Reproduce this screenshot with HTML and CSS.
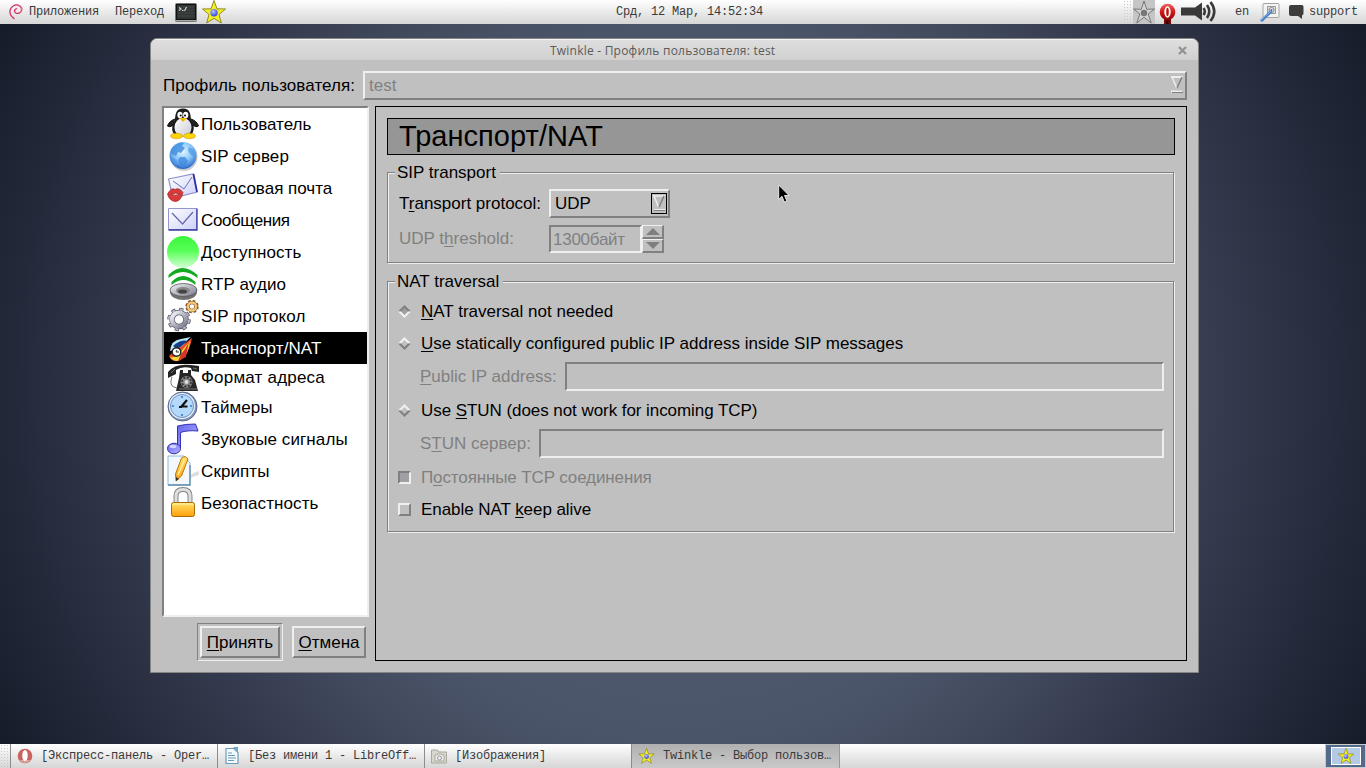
FILE: index.html
```html
<!DOCTYPE html>
<html lang="ru">
<head>
<meta charset="utf-8">
<title>Twinkle</title>
<link rel="stylesheet" href="styles.css">
</head>
<body>
<svg class="defs" width="0" height="0">
  <defs>
    <linearGradient id="belly" x1="0" y1="0" x2="1" y2="1"><stop offset="0" stop-color="#fff"/><stop offset="1" stop-color="#c9c9d4"/></linearGradient>
    <radialGradient id="globe" cx=".5" cy=".35" r=".65"><stop offset="0" stop-color="#e4f5ff"/><stop offset=".5" stop-color="#8fcbfa"/><stop offset="1" stop-color="#2765c8"/></radialGradient>
    <linearGradient id="paper" x1="0" y1="0" x2="1" y2="1"><stop offset="0" stop-color="#fff"/><stop offset="1" stop-color="#ccd0f8"/></linearGradient>
    <linearGradient id="green" x1="0" y1="0" x2="0" y2="1"><stop offset="0" stop-color="#3cf53c"/><stop offset=".45" stop-color="#55ff55"/><stop offset="1" stop-color="#d4ffd4"/></linearGradient>
    <linearGradient id="metal" x1="0" y1="0" x2="1" y2="1"><stop offset="0" stop-color="#f6f6fa"/><stop offset="1" stop-color="#77778a"/></linearGradient>
    <linearGradient id="gold" x1="0" y1="0" x2="0" y2="1"><stop offset="0" stop-color="#ffe56a"/><stop offset="1" stop-color="#ff9d0a"/></linearGradient>
    <linearGradient id="note" x1="0" y1="0" x2="1" y2="1"><stop offset="0" stop-color="#6464f0"/><stop offset="1" stop-color="#b4b4ff"/></linearGradient>
    <linearGradient id="red" x1="0" y1="0" x2="0" y2="1"><stop offset="0" stop-color="#f2655c"/><stop offset=".5" stop-color="#cf1916"/><stop offset="1" stop-color="#8d0606"/></linearGradient>
    <radialGradient id="ball" cx=".4" cy=".35" r=".7"><stop offset="0" stop-color="#b8c8ff"/><stop offset="1" stop-color="#2a3ae0"/></radialGradient>
    <symbol id="star" viewBox="0 0 24 24">
      <path d="M12 .5 15 8.800 23.500 9 17 14.500 19.300 23 12 18.300 4.700 23 7 14.500.5 9 9 8.800Z" fill="#f5ee20" stroke="#77720c" stroke-width=".8"/>
      <circle cx="12" cy="12.700" r="3.700" fill="url(#ball)"/>
    </symbol>
  </defs>
</svg>

<div class="screen">
  <header class="panel panel-top">
    <nav class="panel-menu">
      <svg class="debian" width="14" height="16" viewBox="0 0 14 16"><path d="M5.500 15C1.500 12 .2 8.500 1.300 5.500 2.500 2 6 .3 9.400 1.200 12.500 2.200 13.500 5 12 7.500 10.500 9.700 7.500 10 6 8.300 5 6.800 6 4.500 8.200 4.800" fill="none" stroke="#d6245c" stroke-width="1.200"/><path d="M9 1.500c2.800.5 4.200 2.500 3.300 5" fill="none" stroke="#e0608a" stroke-width="1.500"/></svg>
      <span class="menu-apps">Приложения</span>
      <span class="menu-go">Переход</span>
      <svg class="term" width="22" height="19" viewBox="0 0 22 19"><rect x=".5" y=".5" width="21" height="18" rx="1" fill="#a9aca9" stroke="#777"/><rect x="1.500" y="1.500" width="19" height="15" fill="#303432" stroke="#111"/><path d="M3 4h16M3 7h16M3 10h16M3 13h16" stroke="#434a48"/><path d="m4 4.500 2 1.500-2 1.500M7 7.500h1.500M9.500 8l2-4" stroke="#ddd" stroke-width="1.100" fill="none"/></svg>
      <svg width="26" height="24" class="launcher"><use href="#star"/></svg>
    </nav>
    <div class="clock">Срд, 12 Мар, 14:52:34</div>
    <div class="tray">
      <span class="grip"></span>
      <span class="tray-star"><svg width="22" height="24" viewBox="0 0 22 24"><path d="m11 1 2.700 8.300 7.800-.3-6.300 5 3 9-7.200-5.700L3.800 23l3-9L.5 9l7.800.3Z" fill="#d2d2d2" stroke="#777" stroke-width="1"/><circle cx="11" cy="13" r="3.200" fill="#777"/></svg></span>
      <svg class="tray-opera" width="17" height="22" viewBox="0 0 17 22"><path d="M5 16h7v6H5z" fill="#7c0909"/><path d="M8.500 16v6" stroke="#2b0000" stroke-width="2"/><ellipse cx="8.500" cy="9" rx="7.800" ry="8.300" fill="url(#red)"/><ellipse cx="8.500" cy="9" rx="3.200" ry="5.800" fill="#fff"/><ellipse cx="8.500" cy="9" rx="1.300" ry="4.300" fill="#bd1512"/></svg>
      <svg class="volume" width="36" height="24" viewBox="0 0 36 24"><path d="M0 7.500h14l7-5v18l-7-5H0Z" fill="#3a3a3a"/><path d="M22.500 8q2.600 3.500 0 7M26 5q4.500 6.500 0 13M29.500 2q7.500 9.500 0 19" fill="none" stroke="#3a3a3a" stroke-width="2.600"/></svg>
      <span class="lang">en</span>
      <svg class="network" width="21" height="20" viewBox="0 0 21 20"><path d="M4 1.500h14q1 0 1 1v12q0 1-1 1H4q-1 0-1-1v-12q0-1 1-1Z" fill="#f3f3f3" stroke="#a3a3a3"/><path d="M7.500 4.500h8v7h-8z" fill="#ddd" stroke="#999"/><circle cx="11.500" cy="8" r="2.500" fill="#eee" stroke="#888"/><circle cx="11.500" cy="8" r="1" fill="#456c9b"/><path d="M1 19 11.500 9" stroke="#477fc7" stroke-width="3"/><path d="M1 18 11 9" stroke="#a8c6ec" stroke-width=".8"/></svg>
      <svg class="bubble" width="15" height="15" viewBox="0 0 15 15"><path d="M2 0h11q1.500 0 1.500 2v6q0 2-1.500 2.500V14L9 11H2Q0 11 0 9V2Q0 0 2 0Z" fill="#3d3d3d"/></svg>
      <span>support</span>
    </div>
  </header>

  <main class="desktop">
    <section class="window">
      <div class="titlebar"><span class="title">Twinkle - Профиль пользователя: test</span>
        <svg class="close" width="9" height="9" viewBox="0 0 9 9"><path d="m1 1 7 7M8 1 1 8" stroke="#929292" stroke-width="2.200"/></svg>
      </div>
      <div class="window-body">
        <div class="profile-row">
          <span class="t profile-label">Профиль пользователя:</span>
          <div class="combo combo-profile"><span class="t">test</span>
            <svg width="14" height="20" viewBox="0 0 14 20"><path d="M1 2h12" stroke="#eee" stroke-width="2"/><path d="m2 2 4.700 11" stroke="#eee" stroke-width="1.500"/><path d="M12 2 7 13" stroke="#808080" stroke-width="1.500"/><path d="M1 16.500h11" stroke="#eee" stroke-width="2"/><path d="M2 17.500h11" stroke="#808080"/></svg>
          </div>
        </div>
        <div class="columns">
          <div class="left">
            <ul class="list">
              <li><svg viewBox="0 0 32 32"><path d="M8 11Q2 13 .5 18q2 2 6-1M24 11q6 2 7.500 7-2 2-6-1" fill="#222" stroke="#111"/><path d="M16 .5C8.500.5 8.500 7 8 11 5 17 4 22 7 26q9 6 18 0c3-5 2-10-1-15C23.500 7 23.500.5 16 .5Z" fill="#1c1c1c"/><ellipse cx="16" cy="19.500" rx="8.500" ry="9.500" fill="url(#belly)"/><ellipse cx="13" cy="7" rx="2.600" ry="3.200" fill="#fff"/><ellipse cx="18.700" cy="7" rx="2.600" ry="3.200" fill="#fff"/><circle cx="13.700" cy="7.500" r="1"/><circle cx="18" cy="7.500" r="1"/><path d="M12 10h8l-4 4Z" fill="#f5b800"/><ellipse cx="9.500" cy="28" rx="6" ry="2.800" fill="#ffd500" stroke="#b98a00" stroke-width=".5"/><ellipse cx="22.500" cy="28" rx="6" ry="2.800" fill="#ffd500" stroke="#b98a00" stroke-width=".5"/></svg><span class="t">Пользователь</span></li>
              <li><svg viewBox="0 0 32 32"><ellipse cx="17" cy="17" rx="13.500" ry="14" fill="#ccc"/><circle cx="16" cy="15.500" r="13.500" fill="url(#globe)"/><path d="M5 8q7-7 12-5l-2 3 3 2-4 5-3-1-2 4-4-2-1-1q-1-2 1-5M13 17l5 0 3 4-4 7-4-3-2-5Z" fill="#3f8be0" opacity=".8"/><path d="m22 7 5 3 1 7-4-2-3-4M7 18l3 3-1 5-4-5Z" fill="#4f9cea" opacity=".8"/></svg><span class="t">SIP сервер</span></li>
              <li><svg viewBox="0 0 32 32"><path d="m1.500 7 24.500-5 4 18-24 6Z" fill="url(#paper)" stroke="#8d92d0" stroke-width="1.200"/><path d="m6 9 11 8L25 5" fill="none" stroke="#6a70bb"/><path d="m26.500 2 3.500 18" stroke="#2b2b9c" stroke-width="1.700"/><path d="M.5 22q4-7 7.500-4.500 4-2.500 8 3-2 9-8 9-6-1-7.500-7.500Z" fill="#d93b3b" stroke="#9d2020" stroke-width=".7"/><path d="M4 22q5-2 9 0-5 3-9 0Z" fill="#f7b7bd" stroke="#a11e1e" stroke-width=".7"/></svg><span class="t">Голосовая почта</span></li>
              <li><svg viewBox="0 0 32 32"><path d="M1.500 4.500h28v21h-28Z" fill="url(#paper)" stroke="#9297d0"/><path d="M1.500 26h28.500V4.500" fill="none" stroke="#38389c" stroke-width="1.300"/><path d="m5 9 10.500 11L26 8" fill="none" stroke="#6468a8" stroke-width="1.200"/></svg><span class="t">Сообщения</span></li>
              <li><svg viewBox="0 0 32 32"><circle cx="16" cy="16" r="16" fill="url(#green)"/></svg><span class="t">Доступность</span></li>
              <li><svg viewBox="0 0 32 32"><path d="M1.500 7q13.500-14 29 0v3Q16-2 1.500 10ZM4.500 14q11-12 24 0v3q-12-10-24 0Z" fill="#12aa20"/><ellipse cx="16.500" cy="24" rx="13.500" ry="8" fill="#707070"/><ellipse cx="16.500" cy="22" rx="13.500" ry="6.500" fill="url(#metal)" stroke="#555" stroke-width=".8"/><ellipse cx="16" cy="22.500" rx="7" ry="3.500" fill="#888"/><ellipse cx="15.500" cy="23.500" rx="4.500" ry="2" fill="#444"/></svg><span class="t">RTP аудио</span></li>
              <li><svg viewBox="0 0 32 32"><circle cx="12" cy="19.500" r="10" fill="none" stroke="#4e4e60" stroke-width="3.500" stroke-dasharray="4 3.850"/><circle cx="12" cy="19.500" r="7" fill="none" stroke="#55556a" stroke-width="5.500"/><circle cx="12" cy="19.500" r="10" fill="none" stroke="#b9b9c6" stroke-width="2" stroke-dasharray="3 4.850" stroke-dashoffset="-.5"/><circle cx="12" cy="19.500" r="7" fill="none" stroke="url(#metal)" stroke-width="4.200"/><circle cx="25" cy="6.500" r="5.500" fill="none" stroke="#8c6230" stroke-width="2.500" stroke-dasharray="2.500 1.820"/><circle cx="25" cy="6.500" r="4" fill="none" stroke="#86552d" stroke-width="3.500"/><circle cx="25" cy="6.500" r="4" fill="none" stroke="#f1c779" stroke-width="2.400"/></svg><span class="t">SIP протокол</span></li>
              <li class="selected"><svg viewBox="0 0 32 32"><path d="M3 19Q4 8 14 7L24 5Q18 9 17 15Z" fill="#b9e7fa"/><path d="M6 14q8-7 15-5L11 17Z" fill="#153c89"/><path d="M2 24q2 6 9 5 10-3 14-23l-10 8-8 5Z" fill="#ed4829"/><path d="M3 25q4 1 8-2L23 9Q21 26 10 29q-4 0-7-4Z" fill="#f5d93b"/><path d="M14 22Q19 17 22 9l-3 16-8 4Z" fill="#cf3528"/><circle cx="9.500" cy="20" r="4.300" fill="#fff" stroke="#222" stroke-width="1.400"/><path d="m10 18-1 2h3" stroke="#333" fill="none"/></svg><span class="t">Транспорт/NAT</span></li>
              <li class="short"><svg viewBox="0 0 32 27"><path d="M1 8Q8-1 24 1l8 1v6l-7-1-1-3Q15 2 9 6v4L1 14Z" fill="#242424"/><path d="M13 6h3v3h5V6h3v5l4 5 3 11H9l3-13Z" fill="#272727"/><path d="M5 13q-3 8 2 10l3 1M4 9l4-4M26 4l4 1" fill="none" stroke="#777"/><circle cx="19.500" cy="18" r="6" fill="#888"/><circle cx="19.500" cy="18" r="4.500" fill="none" stroke="#333" stroke-width="1.800" stroke-dasharray="2 1.500"/><circle cx="19.500" cy="18" r="2" fill="#ddd"/><path d="M12 25h18" stroke="#777"/></svg><span class="t">Формат адреса</span></li>
              <li><svg viewBox="0 0 32 32"><circle cx="15.500" cy="15.500" r="14.500" fill="#8296bc" stroke="#59698d"/><circle cx="15" cy="15" r="13" fill="#edf4ff"/><circle cx="15" cy="15" r="11.500" fill="#b5d9fa" stroke="#7091bd"/><path d="M15 5v2M15 23v2M5 15h2M23 15h2" stroke="#357adb" stroke-width="1.700"/><path d="m20 9-5.500 6.500h6M12 16h3" stroke="#111" stroke-width="2.200" fill="none"/></svg><span class="t">Таймеры</span></li>
              <li><svg viewBox="0 0 32 32"><path d="M10.500 25V3q7-2 18-2l2.500 7q-11-1-17.500 1.500V25Z" fill="url(#note)" stroke="#3333b6" stroke-width="1"/><ellipse cx="7" cy="25.500" rx="6.500" ry="5.300" fill="url(#note)" stroke="#3030a7"/><ellipse cx="6" cy="23.500" rx="3.500" ry="1.700" fill="#d4d4ff"/></svg><span class="t">Звуковые сигналы</span></li>
              <li><svg viewBox="0 0 32 32"><path d="m14 24 17-8q1 0 1 4l-18 6Z" fill="#ddd"/><path d="M1 1h16l6 7v22H1Z" fill="#f2f8fc" stroke="#90b8da"/><path d="M1 30h22V10" fill="none" stroke="#618cac" stroke-width="1.300"/><path d="M14.500 3q4-3 6.500 1L14.500 21l-5.500 5-.5-7Z" fill="url(#gold)" stroke="#bd760b"/><path d="m17.500 5-6.500 15" stroke="#ffec9a" stroke-width="1.500"/><path d="M9 22v4l3-2" fill="#333"/></svg><span class="t">Скрипты</span></li>
              <li><svg viewBox="0 0 32 32"><path d="M9 17V9q0-6.500 7-6.500T23 9v8" fill="none" stroke="#858585" stroke-width="5"/><path d="M9 17V9q0-6.500 7-6.500T23 9v8" fill="none" stroke="#ddd" stroke-width="3"/><rect x="4.500" y="15.500" width="23" height="14" rx="2" fill="url(#gold)" stroke="#a96b0a"/><path d="M6 17h20" stroke="#fff1aa"/></svg><span class="t">Безопастность</span></li>
            </ul>
            <div class="buttons">
              <div class="default-ring"><button class="btn btn-ok"><span class="t"><u>П</u>ринять</span></button></div>
              <button class="btn btn-cancel"><span class="t"><u>О</u>тмена</span></button>
            </div>
          </div>
          <div class="page">
            <h1 class="page-title"><span class="t">Транспорт/NAT</span></h1>
            <section class="group group-sip">
              <h2 class="legend t">SIP transport</h2>
              <div class="row protocol">
                <span class="t row-label">T<u>r</u>ansport protocol:</span>
                <div class="combo combo-udp"><span class="t">UDP</span>
                  <svg width="16" height="21" viewBox="0 0 16 21"><rect x=".5" y=".5" width="15" height="20" fill="none" stroke="#000"/><path d="M2 3h12" stroke="#eee" stroke-width="1.500"/><path d="m3 3 4.500 11" stroke="#eee" stroke-width="1.500"/><path d="m13 3-5 11" stroke="#808080" stroke-width="1.500"/><path d="M3 16.500h11" stroke="#eee"/><path d="M3 17.500h11" stroke="#808080"/></svg>
                </div>
              </div>
              <div class="row threshold">
                <span class="t row-label">UDP t<u>h</u>reshold:</span>
                <div class="spin-field"><span class="t">1300байт</span></div>
                <div class="spin-buttons">
                  <span><svg width="14" height="7"><path d="M0 7 7 0l7 7Z" fill="#808080"/></svg></span>
                  <span><svg width="14" height="7"><path d="m0 0 7 7 7-7Z" fill="#808080"/></svg></span>
                </div>
              </div>
            </section>
            <section class="group group-nat">
              <h2 class="legend t">NAT traversal</h2>
              <div class="option"><svg width="13" height="13" viewBox="0 0 13 13"><path d="M6.500 0 13 6.500H0Z" fill="#808080"/><path d="M0 6.500h13L6.500 13Z" fill="#f0f0f0"/><path d="m6.500 3 3.500 3.500L6.500 10 3 6.500Z" fill="#a0a0a4"/></svg><span class="t o1"><u>N</u>AT traversal not needed</span></div>
              <div class="option"><svg width="13" height="13" viewBox="0 0 13 13"><path d="M6.500 0 13 6.500H0Z" fill="#f0f0f0"/><path d="M0 6.500h13L6.500 13Z" fill="#808080"/><path d="m6.500 3 3.500 3.500L6.500 10 3 6.500Z" fill="#c0c0c0"/></svg><span class="t o2"><u>U</u>se statically configured public IP address inside SIP messages</span></div>
              <div class="field"><span class="t f1"><u>P</u>ublic IP address:</span><div class="input"></div></div>
              <div class="option"><svg width="13" height="13" viewBox="0 0 13 13"><path d="M6.500 0 13 6.500H0Z" fill="#f0f0f0"/><path d="M0 6.500h13L6.500 13Z" fill="#808080"/><path d="m6.500 3 3.500 3.500L6.500 10 3 6.500Z" fill="#c0c0c0"/></svg><span class="t o3">Use <u>S</u>TUN (does not work for incoming TCP)</span></div>
              <div class="field"><span class="t f2">S<u>T</u>UN сервер:</span><div class="input"></div></div>
              <div class="option disabled"><span class="box checked"></span><span class="t o4">П<u>о</u>стоянные TCP соединения</span></div>
              <div class="option"><span class="box"></span><span class="t o5">Enable NAT <u>k</u>eep alive</span></div>
            </section>
          </div>
        </div>
      </div>
    </section>
    <svg class="cursor" width="12" height="19" viewBox="0 0 12 19"><path d="M.7 1v14.500L4 12.300 6.300 18l2.600-1.100L6.500 11.500H11Z" fill="#000" stroke="#fff" stroke-width=".8"/></svg>
  </main>

  <footer class="panel panel-bottom">
    <span class="grip"></span>
    <div class="task"><svg width="16" height="18" viewBox="0 0 16 18"><ellipse cx="8" cy="9" rx="7.300" ry="7.300" fill="#c9635f"/><path d="M2 13q6 6 12 0" fill="#dda19d"/><ellipse cx="8" cy="8.500" rx="2.700" ry="5.500" fill="#fff"/></svg><span>[Экспресс-панель - Oper…</span></div>
    <div class="task"><svg width="16" height="18" viewBox="0 0 16 18"><path d="M2 1.500h8l4 4v11H2Z" fill="#f5fafc" stroke="#6d9db9" stroke-width="1.200"/><path d="M9 0h5v5Z" fill="#6fa4c5"/><path d="M4 6h4M4 8.500h7M4 11h8M4 13.500h6" stroke="#679bbb"/></svg><span>[Без имени 1 - LibreOff…</span></div>
    <div class="task"><svg width="16" height="16" viewBox="0 0 16 16"><path d="M.5 2h6l1 2h8v11H.5Z" fill="#d6d6ce" stroke="#aaa99f"/><path d="M4 7h2l1-1h3l1 1h2v6H4Z" fill="#eee" stroke="#aaa99f"/><circle cx="8.500" cy="10" r="2" fill="none" stroke="#999"/></svg><span>[Изображения]</span></div>
    <div class="task active"><svg width="17" height="16"><use href="#star"/></svg><span>Twinkle - Выбор пользов…</span></div>
    <div class="pager"><div class="pager-window"><svg width="16" height="16"><use href="#star"/></svg></div></div>
  </footer>
</div>
</body>
</html>
```
FILE: styles.css
```css
* { box-sizing: border-box; }
body { margin: 0; overflow: hidden; }
.defs { position: absolute; }
svg { display: block; flex: none; }
.screen { width: 1366px; height: 768px; display: flex; flex-direction: column; font: 12px/24px "Liberation Mono", monospace; letter-spacing: -.2px; color: #3a3a3a; white-space: nowrap; }

.panel { height: 24px; flex: none; display: flex; background: linear-gradient(#fff, #ececec 45%, #d6d6d6); }
.panel-top { display: grid; grid-template-columns: 1fr auto 1fr; line-height: 24px; }
.panel-menu { display: flex; padding-left: 9px; }
.debian { margin: 4px 6px 0 0; }
.menu-apps { width: 86px; }
.menu-go { width: 60px; }
.term { margin: 3px 4px 0 0; }
.clock { padding-left: 17px; width: 168px; }
.tray { display: flex; justify-content: flex-end; padding-right: 8px; }
.grip { width: 10px; background: radial-gradient(circle, #c9c9c9 .7px, transparent 1px) 0 0 / 3px 3px; }
.tray-star { width: 22px; background: #c5c5c5; }
.tray-opera { margin: 3px 5px 0 4px; }
.volume { margin-right: 18px; }
.lang { width: 25px; }
.network { margin: 2px 8px 0 0; }
.bubble { margin: 5px 5px 0 0; }

.desktop { position: relative; flex: 1; background: radial-gradient(circle 790px at 683px 360px, #566479 0, #4b556a 45%, #434b5e 55%, #2c3144 77%, #1c2231 92%, #131925 100%); }
.window { position: absolute; left: 150px; top: 14px; width: 1049px; height: 635px; display: flex; flex-direction: column; background: #c0c0c0; border: 1px solid #858585; border-radius: 7px 7px 0 0; overflow: hidden; font: 17px/20px "Liberation Sans", sans-serif; letter-spacing: 0; color: #000; }
.titlebar { height: 21px; display: flex; align-items: center; padding: 1px 11px 0 399px; justify-content: space-between; background: linear-gradient(#dedede, #d0d0d0); border-top: 1px solid #f4f4f4; font: 12px/18px "Open Sans", sans-serif; letter-spacing: .22px; color: #5a5a5a; }
.window-body { flex: 1; display: flex; flex-direction: column; gap: 6px; padding: 11px 11px 11px; }
.profile-row { height: 29px; display: flex; align-items: center; padding-left: 1px; }
.profile-label { width: 200px; letter-spacing: .08px; }
.combo { display: flex; align-items: center; justify-content: space-between; border: 2px solid; border-color: #efefef #808080 #808080 #efefef; }
.combo-profile { flex: 1; height: 29px; padding: 0 1px 0 4px; color: #808080; }
.combo-profile svg { margin-bottom: 2px; }
.columns { height: 555px; display: flex; gap: 6px; }
.left { width: 207px; display: flex; flex-direction: column; justify-content: space-between; }
.list { margin: 0; padding: 0; height: 511px; list-style: none; background: #fff; border: 2px solid; border-color: #808080 #efefef #efefef #808080; }
.list li { height: 32px; display: flex; align-items: center; padding-left: 3px; gap: 2px; letter-spacing: .1px; }
.list .t { padding-top: 2px; }
.list li:nth-child(1), .list li:nth-child(3), .list li:nth-child(10) { letter-spacing: 0; }
.list li:nth-child(4) { letter-spacing: -.4px; }
.list svg { width: 32px; height: 32px; }
.list .short { height: 27px; letter-spacing: .2px; }
.list .short .t { padding-top: 1px; }
.list .short svg { height: 27px; }
.list .selected { background: #000; color: #fff; }
.buttons { display: flex; align-items: center; justify-content: flex-end; gap: 9px; padding-right: 3px; }
.default-ring { padding: 2px; border: 1px solid; border-color: #808080 #efefef #efefef #808080; }
.btn { height: 32px; padding: 2px 0 0; font: inherit; background: #c0c0c0; border: 2px solid; border-color: #efefef #808080 #808080 #efefef; }
.btn-ok { width: 80px; display: block; }
.btn-cancel { width: 74px; }
u { text-decoration-thickness: 1px; text-underline-offset: 2px; text-decoration-skip-ink: none; }

.page { flex: 1; border: 1px solid #000; padding: 11px; }
.page-title { margin: 0; height: 37px; padding-left: 11px; background: #969696; border: 1px solid #000; font-size: 29px; line-height: 35px; font-weight: 400; letter-spacing: .05px; }
.group { margin-right: 1px; border: 1px solid #808080; box-shadow: 1px 1px #efefef, inset 1px 1px #efefef; padding: 0 9px 0 10px; }
.group-sip { margin-top: 17px; height: 91px; }
.group-nat { margin-top: 18px; height: 251px; }
.legend { width: max-content; margin: -10px 0 0 -3px; padding: 0 4px 0 2px; font-size: 17px; line-height: 20px; font-weight: 400; background: #c0c0c0; }
.row { display: flex; align-items: center; padding-left: 1px; }
.row-label { width: 150px; }
.protocol { margin-top: 6px; height: 29px; }
.combo-udp { width: 121px; height: 29px; padding: 0 1px 0 4px; }
.threshold { margin-top: 6px; height: 29px; color: #808080; }
.spin-field { width: 93px; height: 28px; padding: 3px 0 0 2px; line-height: 20px; letter-spacing: -.25px; border: 2px solid; border-color: #808080 #efefef #efefef #808080; }
.spin-buttons { display: flex; flex-direction: column; }
.spin-buttons span { width: 22px; height: 14px; display: flex; align-items: center; justify-content: center; border: 1px solid; border-width: 1px 2px 2px 1px; border-color: #efefef #808080 #808080 #efefef; }
.option { height: 32px; display: flex; align-items: center; gap: 10px; }
.option svg, .option .box { margin-bottom: 2px; }
.legend + .option { margin-top: 4px; }
.field { height: 35px; display: flex; align-items: center; padding: 0 0 2px 22px; color: #808080; }
.field .t { flex: none; }
.f1 { width: 145px; }
.f2 { width: 119px; }
.o3, .o5 { letter-spacing: -.06px; }
.o4 { letter-spacing: -.12px; }
.input { flex: 1; height: 29px; border: 2px solid; border-color: #808080 #efefef #efefef #808080; }
.disabled { color: #808080; }
.box { width: 13px; height: 13px; border: 2px solid; border-color: #efefef #808080 #808080 #efefef; }
.box.checked { background: #a0a0a4; border-color: #808080 #efefef #efefef #808080; }
.cursor { position: absolute; left: 778px; top: 160px; }

.panel-bottom { line-height: 23px; }
.task { width: 207px; display: flex; align-items: center; gap: 8px; padding-left: 6px; border-left: 1px solid #8c8c8c; }
.task.active { width: 209px; background: linear-gradient(#b0b0b0, #c9c9c9); border-right: 1px solid #999; }
.pager { width: 41px; margin-left: auto; display: flex; align-items: center; justify-content: center; background: #526b8b; border: 1px solid #c9c9c9; }
.pager-window { width: 30px; height: 18px; display: flex; align-items: center; justify-content: center; background: #b4c9e3; border: 1px solid #fff; }
```
